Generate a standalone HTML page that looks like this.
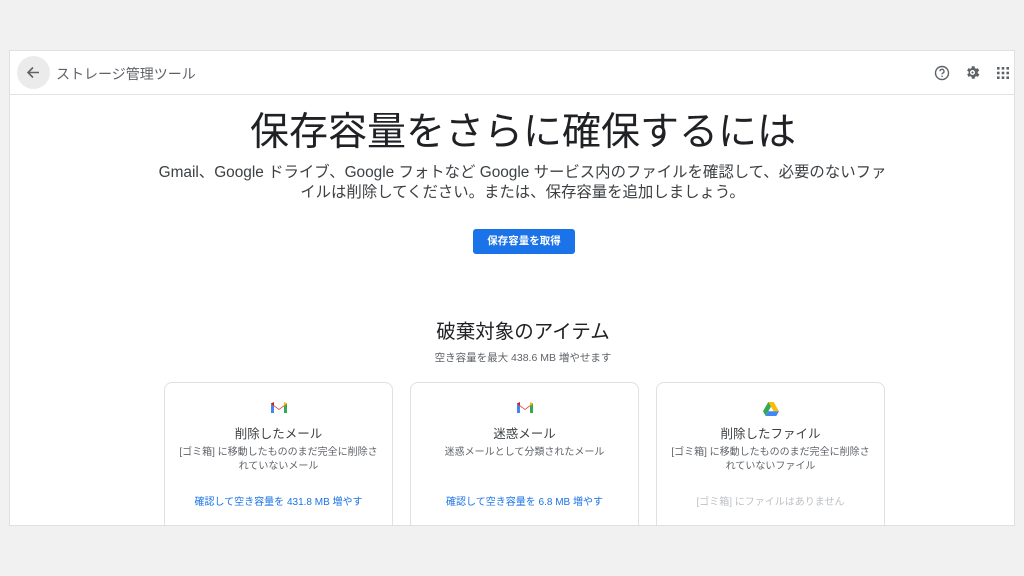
<!DOCTYPE html>
<html><head><meta charset="utf-8"><style>
*{margin:0;padding:0;box-sizing:border-box}
body{width:1024px;height:576px;background:#f1f1f1;font-family:"Liberation Sans","Noto Sans CJK JP",sans-serif;position:relative;overflow:hidden;color:#3c4043}
.frame{position:absolute;left:9px;top:50px;width:1006px;height:476px;background:#fff;border:1px solid #e0e0e0;overflow:hidden}
.hdr{position:absolute;left:0;top:0;width:100%;height:44px;border-bottom:1px solid #e3e3e3}
.back{position:absolute;left:7px;top:5px;width:33px;height:33px;border-radius:50%;background:#ebebeb}
.ht{position:absolute;left:46px;top:13px;font-size:14px;color:#5f6368}
.abs{position:absolute}
.c{position:absolute;left:11px;width:1004px;text-align:center}
.card{position:absolute;top:331px;width:229px;height:150px;border:1px solid #e0e0e0;border-radius:8px;text-align:center}
.card .t{position:absolute;top:40px;width:100%;font-size:12.5px;color:#3c4043}
.card .d{position:absolute;top:63px;left:10px;right:10px;font-size:10px;line-height:14px;color:#5f6368}
.card .l{position:absolute;top:110px;width:100%;font-size:10px;color:#1a73e8}
.card svg{position:absolute;left:106px;top:19px}
</style></head><body>
<div class="frame">
<div class="hdr">
<div class="back"><svg width="33" height="33" viewBox="0 0 33 33"><path d="M22 16.5H11M16 11.5l-5 5 5 5" stroke="#5f6368" stroke-width="1.6" fill="none"/></svg></div>
<div class="ht">ストレージ管理ツール</div>
<svg class="abs" style="left:924px;top:14px" width="16" height="16" viewBox="0 0 16 16"><circle cx="8" cy="8" r="6.5" stroke="#5f6368" stroke-width="1.4" fill="none"/><path d="M6 6.3a2 2 0 1 1 2.6 1.9c-.5.2-.6.6-.6 1.2" stroke="#5f6368" stroke-width="1.3" fill="none"/><circle cx="8" cy="11.3" r=".8" fill="#5f6368"/></svg>
<svg class="abs" style="left:954px;top:13px" width="17" height="17" viewBox="0 0 24 24"><path fill="#5f6368" d="M19.4 13a7.5 7.5 0 0 0 0-2l2.1-1.6-2-3.5-2.5 1a7 7 0 0 0-1.7-1L15 3.2h-4l-.4 2.7a7 7 0 0 0-1.7 1l-2.5-1-2 3.5L6.6 11a7.5 7.5 0 0 0 0 2l-2.1 1.6 2 3.5 2.5-1a7 7 0 0 0 1.7 1l.4 2.7h4l.4-2.7a7 7 0 0 0 1.7-1l2.5 1 2-3.5zM12 15.5a3.5 3.5 0 1 1 0-7 3.5 3.5 0 0 1 0 7zm0-2a1.5 1.5 0 1 0 0-3 1.5 1.5 0 0 0 0 3z"/></svg>
<svg class="abs" style="left:987px;top:16px" width="12" height="12" viewBox="0 0 12 12" fill="#5f6368"><rect x="0" y="0" width="2.6" height="2.6"/><rect x="4.7" y="0" width="2.6" height="2.6"/><rect x="9.4" y="0" width="2.6" height="2.6"/><rect x="0" y="4.7" width="2.6" height="2.6"/><rect x="4.7" y="4.7" width="2.6" height="2.6"/><rect x="9.4" y="4.7" width="2.6" height="2.6"/><rect x="0" y="9.4" width="2.6" height="2.6"/><rect x="4.7" y="9.4" width="2.6" height="2.6"/><rect x="9.4" y="9.4" width="2.6" height="2.6"/></svg>
</div>
<div class="c" style="top:50px;font-size:39px;color:#202124">保存容量をさらに確保するには</div>
<div class="c" style="top:112px;font-size:15.4px;line-height:20px;color:#3c4043;left:145px;width:735px">Gmail、Google ドライブ、Google フォトなど Google サービス内のファイルを確認して、必要のないファ<br>イルは削除してください。または、保存容量を追加しましょう。</div>
<div class="abs" style="left:463px;top:178px;width:102px;height:25px;background:#1a73e8;border-radius:3px;color:#fff;font-size:10.5px;text-align:center;line-height:25px;font-weight:bold">保存容量を取得</div>
<div class="c" style="top:264px;font-size:19.5px;color:#202124">破棄対象のアイテム</div>
<div class="c" style="top:299px;font-size:10.5px;color:#5f6368">空き容量を最大 438.6 MB 増やせます</div>
<div class="card" style="left:154px">
<svg width="16" height="12" viewBox="0 0 16 12"><path d="M0 2v9h3V4z" fill="#4285f4"/><path d="M13 4v7h3V2z" fill="#34a853"/><path d="M0 2l8 6 8-6V1L8 7 0 1z" fill="#ea4335"/><path d="M0 1.5 3 4V0z" fill="#c5221f"/><path d="M16 1.5 13 4V0z" fill="#fbbc04"/></svg>
<div class="t">削除したメール</div><div class="d">[ゴミ箱] に移動したもののまだ完全に削除されていないメール</div><div class="l">確認して空き容量を 431.8 MB 増やす</div></div>
<div class="card" style="left:400px">
<svg width="16" height="12" viewBox="0 0 16 12"><path d="M0 2v9h3V4z" fill="#4285f4"/><path d="M13 4v7h3V2z" fill="#34a853"/><path d="M0 2l8 6 8-6V1L8 7 0 1z" fill="#ea4335"/><path d="M0 1.5 3 4V0z" fill="#c5221f"/><path d="M16 1.5 13 4V0z" fill="#fbbc04"/></svg>
<div class="t">迷惑メール</div><div class="d">迷惑メールとして分類されたメール</div><div class="l">確認して空き容量を 6.8 MB 増やす</div></div>
<div class="card" style="left:646px">
<svg width="16" height="14" viewBox="0 0 16 14"><path d="M5.3 0h5.4l5.3 9.2h-5.4z" fill="#fbbc04"/><path d="M5.3 0 0 9.2 2.7 14 8 4.6z" fill="#34a853"/><path d="M2.7 14h10.6l2.7-4.8H5.4z" fill="#4285f4"/></svg>
<div class="t">削除したファイル</div><div class="d">[ゴミ箱] に移動したもののまだ完全に削除されていないファイル</div><div class="l" style="color:#bdc1c6">[ゴミ箱] にファイルはありません</div></div>
</div>
</body></html>
